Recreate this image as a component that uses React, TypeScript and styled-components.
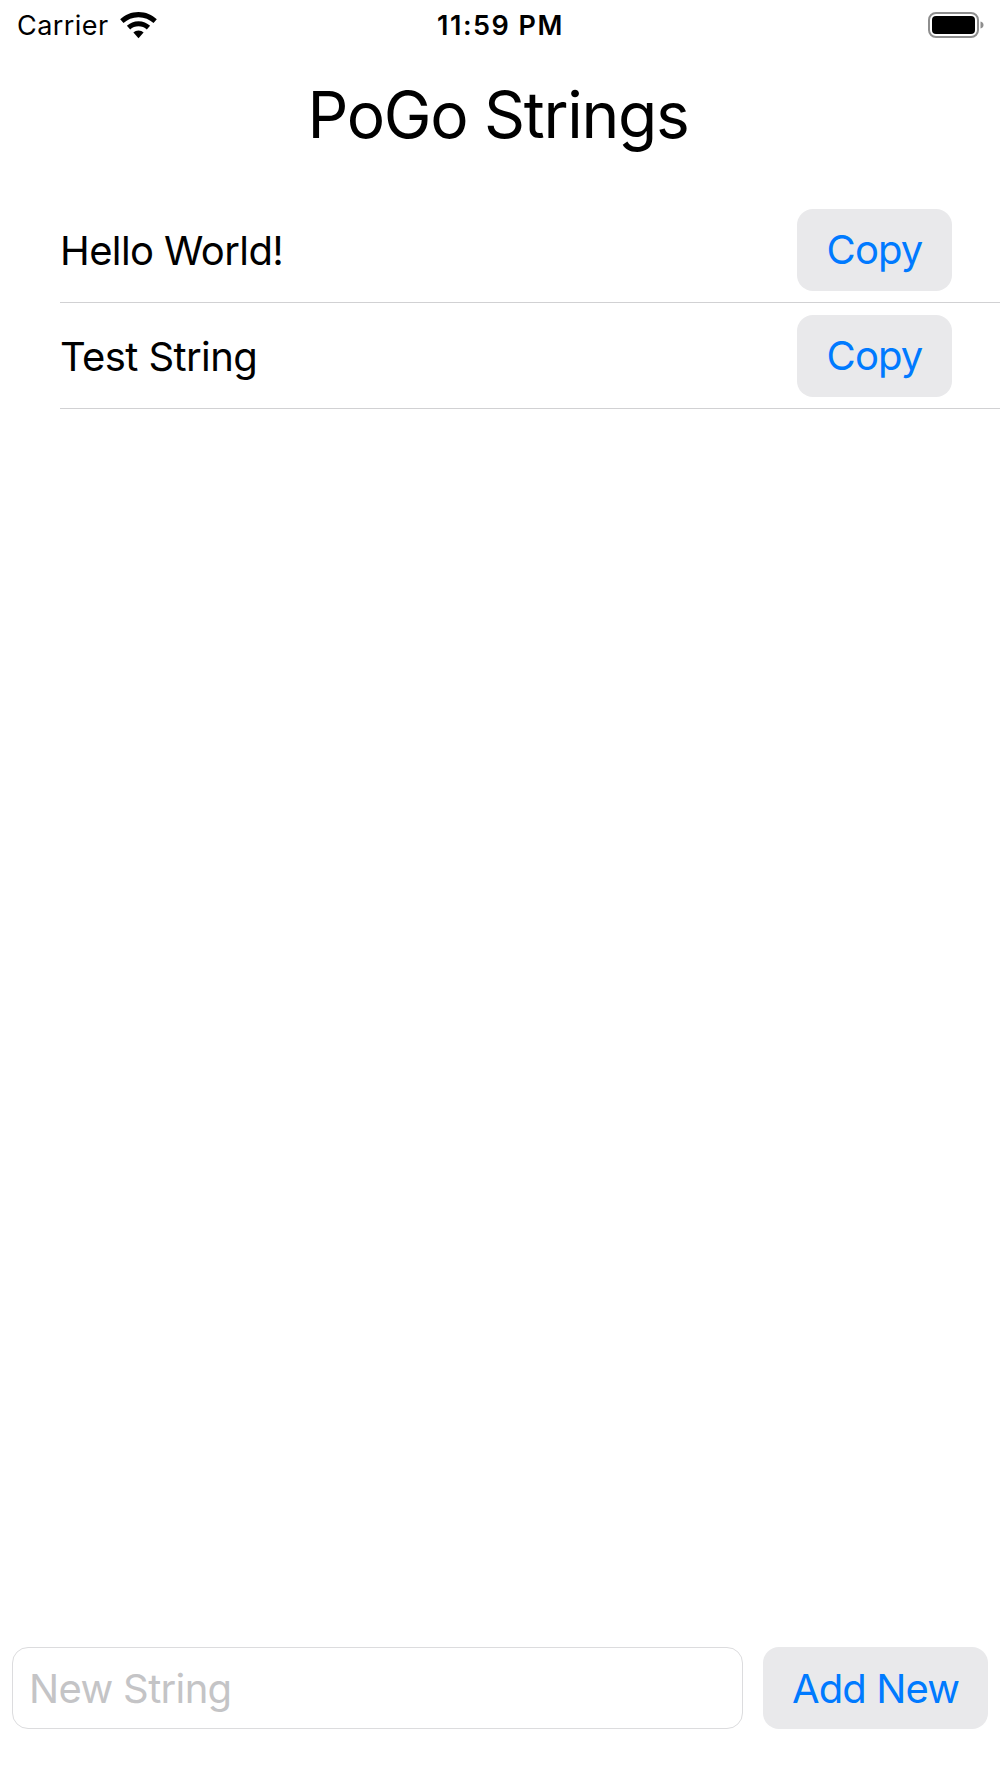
import React from 'react'
import styled, { createGlobalStyle } from 'styled-components'

const GlobalStyle = createGlobalStyle`
    html, body {
        margin: 0;
        padding: 0;
        background: #fff;
    }
`

const Screen = styled.div`
    width: 1000px;
    height: 1778px;
    display: flex;
    flex-direction: column;
    font-family: Inter, "Liberation Sans", sans-serif;
    color: #000;
    overflow: hidden;
`

const StatusBar = styled.div`
    height: 50px;
    flex: none;
    display: grid;
    grid-template-columns: 1fr auto 1fr;
    align-items: center;
    padding: 0 16px 0 17px;
`

const StatusLeft = styled.div`
    display: flex;
    align-items: center;
    gap: 11px;
    font-size: 27px;
    letter-spacing: 0.45px;
`

const StatusTime = styled.div`
    font-size: 27px;
    font-weight: 600;
    letter-spacing: 1.5px;
`

const StatusRight = styled.div`
    display: flex;
    justify-content: flex-end;
`

const Title = styled.h1`
    margin: 0;
    height: 147px;
    flex: none;
    display: flex;
    align-items: center;
    justify-content: center;
    padding: 0 4px 18px 0;
    box-sizing: border-box;
    font-size: 64px;
    font-weight: 400;
    letter-spacing: -1.3px;
`

const List = styled.div`
    flex: 1;
    padding-left: 60px;
`

const Row = styled.div`
    height: 106px;
    box-sizing: border-box;
    display: flex;
    align-items: center;
    justify-content: space-between;
    padding-right: 48px;
    border-bottom: 1.5px solid #d1d1d3;
    font-size: 40px;
    letter-spacing: -0.6px;
`

const RowLabel = styled.span`
    padding-top: 2px;
`

const ActionButton = styled.button<{ $width: number }>`
    width: ${(p) => p.$width}px;
    height: 82px;
    flex: none;
    padding: 0;
    border: none;
    border-radius: 16px;
    background: #e9e9eb;
    color: #007aff;
    font-family: inherit;
    font-size: 40px;
    letter-spacing: -0.9px;
`

const Footer = styled.div`
    flex: none;
    display: flex;
    gap: 20px;
    padding: 0 12px 49px;
`

const NewString = styled.input`
    flex: 1;
    min-width: 0;
    height: 82px;
    box-sizing: border-box;
    padding: 0 16px;
    border: 1.5px solid #dcdcde;
    border-radius: 16px;
    font-family: inherit;
    font-size: 40px;
    letter-spacing: -0.65px;
    outline: none;

    &::placeholder {
        color: #c4c4c6;
        opacity: 1;
    }
`

const WifiIcon = () => (
    <svg width="37" height="27" viewBox="0 0 37 27">
        <path d="M18.5 0C11.3 0 5 2.8 0.2 7.2L3.5 11C7.4 7.4 12.6 5.2 18.5 5.2S29.6 7.4 33.5 11L36.8 7.2C32 2.8 25.7 0 18.5 0Z" />
        <path d="M18.5 9.2C14 9.2 9.9 11 6.9 13.8L10.2 17.5C12.4 15.5 15.3 14.3 18.5 14.3S24.6 15.5 26.8 17.5L30.1 13.8C27.1 11 23 9.2 18.5 9.2Z" />
        <path d="M18.5 18.4C16.5 18.4 14.7 19.2 13.4 20.4L18.5 26.2L23.6 20.4C22.3 19.2 20.5 18.4 18.5 18.4Z" />
    </svg>
)

const BatteryIcon = () => (
    <svg width="56" height="28" viewBox="0 0 56 28">
        <rect x="1" y="2" width="49" height="24" rx="7" fill="none" stroke="#8e8e8e" strokeWidth="2" />
        <rect x="4" y="5" width="43" height="18" rx="4" fill="#000" />
        <path d="M52.5 10.5C54.5 11 55.5 12.4 55.5 14S54.5 17 52.5 17.5Z" fill="#8e8e8e" />
    </svg>
)

const strings = ['Hello World!', 'Test String']

const App = () => {
    return (
        <Screen>
            <GlobalStyle />
            <StatusBar>
                <StatusLeft>
                    Carrier
                    <WifiIcon />
                </StatusLeft>
                <StatusTime>11:59 PM</StatusTime>
                <StatusRight>
                    <BatteryIcon />
                </StatusRight>
            </StatusBar>
            <Title>PoGo Strings</Title>
            <List>
                {strings.map((s) => (
                    <Row key={s}>
                        <RowLabel>{s}</RowLabel>
                        <ActionButton $width={155}>Copy</ActionButton>
                    </Row>
                ))}
            </List>
            <Footer>
                <NewString placeholder="New String" />
                <ActionButton $width={225}>Add New</ActionButton>
            </Footer>
        </Screen>
    )
}

export default App
